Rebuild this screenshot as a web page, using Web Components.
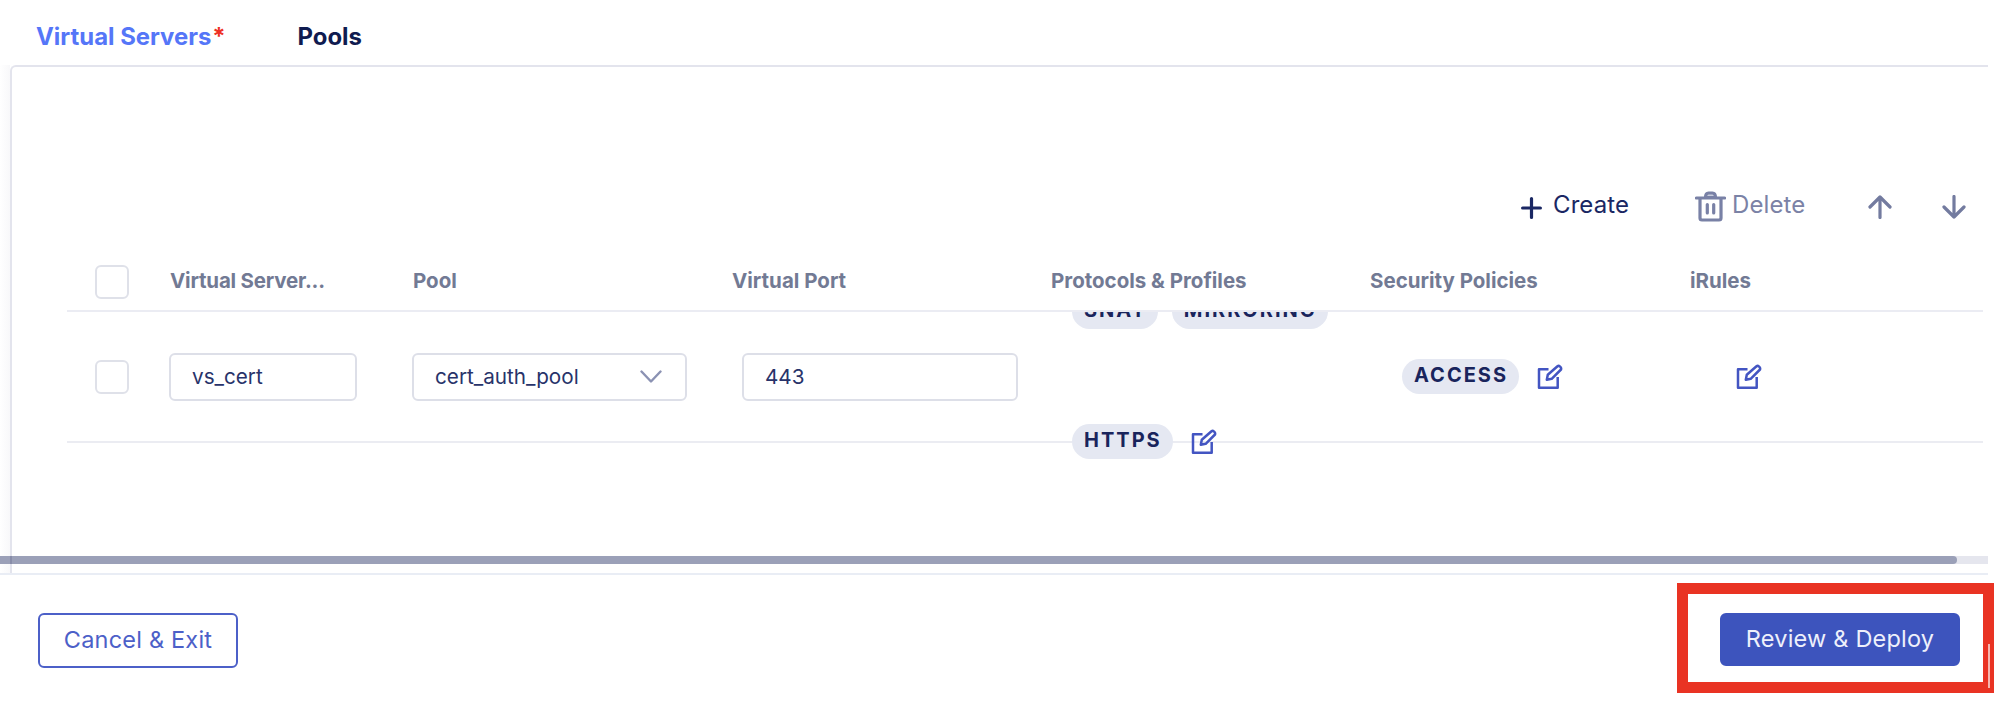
<!DOCTYPE html>
<html lang="en">
<head>
<meta charset="utf-8">
<title>Virtual Servers</title>
<style>
html,body{margin:0;height:100%;background:#fff}
body{font-family:Inter,"Liberation Sans",sans-serif;overflow:hidden}
</style>
</head>
<body>
<app-page></app-page>
<script>
const define = (name, html) => customElements.define(name, class extends HTMLElement {
  constructor() {
    super();
    const t = document.createElement('template');
    t.innerHTML = html;
    this.attachShadow({ mode: 'open' }).appendChild(t.content.cloneNode(true));
  }
});

define('check-box', `<style>:host{display:block;box-sizing:border-box;width:34px;height:34px;border:2px solid #dfe1e9;border-radius:6px;background:#fff}</style>`);

define('text-field', `<style>
:host{display:flex;align-items:center;justify-content:space-between;box-sizing:border-box;height:48px;padding:0 23px 0 21px;border:2px solid #dddfe8;border-radius:6px;color:#28336a;font-size:20.7px;line-height:24px;white-space:nowrap}
</style><span><slot></slot></span><slot name="icon"></slot>`);

define('tag-pill', `<style>
:host{display:block;box-sizing:border-box;height:35px;padding:0 11px 0 12px;border-radius:18px;background:#e5e8f2;color:#19245c;font-size:20px;font-weight:650;line-height:32px;letter-spacing:2px;white-space:nowrap}
</style><slot></slot>`);

define('icon-edit', `<style>:host{display:block;width:26px;height:26px}svg{display:block}</style>
<svg width="26" height="26" viewBox="0 0 26 26" fill="none" stroke="#4355c2" stroke-width="2.500" stroke-linejoin="round"><path d="M11.500 5.200H2v18.600h18.700V13"/><path d="M9.800 15.800l1-5L20.500 2.200c1.500-1 4.300 1 3.500 3.300l-9.300 9.300z"/></svg>`);

define('icon-chevron', `<style>:host{display:block}svg{display:block}</style>
<svg width="22" height="14" viewBox="0 0 22 14" fill="none" stroke="#8b92b3" stroke-width="2.400" stroke-linecap="round" stroke-linejoin="round"><path d="M1.500 1.500l9.500 10 9.500-10"/></svg>`);

define('tab-label', `<style>
:host{display:block;color:#0f1b50;font-size:23.900px;font-weight:700;line-height:30px;white-space:nowrap}
:host([active]){width:189px;color:#5576f8}
</style><slot></slot>`);

define('required-mark', `<style>:host{color:#ee3124;margin-left:1px}</style>*`);

define('tab-bar', `<style>:host{display:flex;box-sizing:border-box;height:65px;padding:22px 0 0 36px;gap:72.500px}</style><slot></slot>`);

define('tool-action', `<style>
:host{display:flex;align-items:flex-start;color:#1a2763;font-size:24px;line-height:30px;letter-spacing:.1px;white-space:nowrap}
:host([muted]){color:#7b82a6}
</style><slot name="icon"></slot><slot></slot>`);

define('tool-bar', `<style>
:host{display:flex;box-sizing:border-box;height:71px;margin-top:-1px;padding:0 0 0 1454px;margin-bottom:1px}
svg{display:block}
.create svg{margin:7px 11px 0 0}
.create{width:174px}
.delete svg{margin:1px 6px 0 0}
.delete{width:173px}
.up{width:74px}
.up svg,.down svg{margin-top:5px}
</style>
<tool-action class="create"><svg slot="icon" width="21" height="22" viewBox="0 0 21 22" stroke="#1a2763" stroke-width="3.200" stroke-linecap="round"><path d="M10.500 1.600v18.800M1.600 11h17.800"/></svg>Create</tool-action>
<tool-action class="delete" muted><svg slot="icon" width="31" height="31" viewBox="0 0 31 31" fill="none" stroke="#7981a6" stroke-width="3.200" stroke-linecap="round" stroke-linejoin="round"><path d="M1.500 7h28M5 7v20q0 2 2 2h17q2 0 2-2V7"/><path d="M10.500 6.500q0-4.500 3-4.500h4q3 0 3 4.500z" fill="#c9cddd"/><path d="M12.300 13.500v8.500M18.700 13.500v8.500"/></svg>Delete</tool-action>
<tool-action class="up"><svg slot="icon" width="24" height="24" viewBox="0 0 24 24" fill="none" stroke="#737b9f" stroke-width="3.200" stroke-linecap="round" stroke-linejoin="round"><path d="M12 22.500V2M2 12L12 2l10 10"/></svg></tool-action>
<tool-action class="down"><svg slot="icon" width="24" height="24" viewBox="0 0 24 24" fill="none" stroke="#737b9f" stroke-width="3.200" stroke-linecap="round" stroke-linejoin="round"><path d="M12 1.500V22M2 12l10 10 10-10"/></svg></tool-action>`);

define('server-table', `<style>
:host{display:block;width:1916px}
.grid{display:grid;grid-template-columns:102px 243px 319px 319px 319px 320px 294px}
.head{box-sizing:border-box;height:50px;border-bottom:2px solid #ebecf3;color:#727a94;font-size:20.500px;font-weight:700;line-height:27px;white-space:nowrap}
.head check-box,.row check-box{margin-left:28px}
.head span{padding:5px 0 0 1px}
.head .trim{letter-spacing:-.2px}
.head check-box{margin-top:3px}
.row{box-sizing:border-box;height:131px;grid-template-rows:129px;align-items:center;border-bottom:2px solid #ebecf2}
.name{width:188px}
.pool{width:275px}
.port{width:276px;margin-left:11px}
.profiles{align-self:start;height:148px;margin-left:22px;overflow:hidden}
.stack{display:flex;flex-direction:column;gap:95px;margin-top:-18px}
.line{display:flex;align-items:center;gap:14px}
.line.last{gap:18px}
.policies{display:flex;align-items:center;gap:18px;margin-left:33px}
.rules{margin-left:47px}
</style>
<div class="grid head"><check-box></check-box><span class="trim">Virtual Server...</span><span>Pool</span><span>Virtual Port</span><span>Protocols &amp; Profiles</span><span>Security Policies</span><span>iRules</span></div>
<div class="grid row"><check-box></check-box>
<text-field class="name">vs_cert</text-field>
<text-field class="pool">cert_auth_pool<icon-chevron slot="icon"></icon-chevron></text-field>
<text-field class="port">443</text-field>
<div class="profiles"><div class="stack"><div class="line"><tag-pill>SNAT</tag-pill><tag-pill>MIRRORING</tag-pill></div><div class="line last"><tag-pill>HTTPS</tag-pill><icon-edit></icon-edit></div></div></div>
<div class="policies"><tag-pill>ACCESS</tag-pill><icon-edit></icon-edit></div>
<div class="rules"><icon-edit></icon-edit></div></div>`);

define('content-panel', `<style>
:host{display:flex;height:508px;width:1988px;overflow:hidden}
.edge{flex:none;width:10px;background:linear-gradient(90deg,#fff,#f8f8fa)}
.body{flex:1;min-width:0;box-sizing:border-box;border:2px solid #e3e4ed;border-right:0;border-bottom:0;border-top-left-radius:6px;padding:124px 0 0 55px}
</style><div class="edge"></div><div class="body"><slot></slot></div>`);

define('scroll-track', `<style>
:host{display:block;height:8px;width:1988px;margin-top:-17px;margin-bottom:9px;background:#e5e6ee;position:relative}
div{width:1957px;height:8px;border-radius:0 4px 4px 0;background:linear-gradient(90deg,transparent 10px,#888da9 10px,#888da9 12px,transparent 12px),#9ba0b8}
</style><div></div>`);

define('action-button', `<style>
:host{display:flex;align-items:center;justify-content:center;box-sizing:border-box;height:55px;padding-bottom:3px;border:2px solid #4c60c8;border-radius:6px;color:#4c60c8;font-size:23.500px;letter-spacing:.2px;white-space:nowrap}
:host([primary]){background:#3d54bd;border-color:#3d54bd;color:#eef0fb}
</style><slot></slot>`);

define('page-footer', `<style>
:host{display:flex;justify-content:space-between;box-sizing:border-box;height:135px;width:1994px;padding-left:37px;position:relative}
:host::before{content:"";position:absolute;left:0;top:0;width:1988px;height:2px;background:#e9edf5}
.cancel{width:200px;margin-top:40px;margin-left:1px}
.mark{display:flex;box-sizing:border-box;width:317px;height:110px;margin-top:10px;border:11px solid #e93323;padding:19px 0 0 32px;position:relative}
.mark::after{content:"";position:absolute;right:-7px;top:50px;width:2px;height:44px;background:#f7b5ae}
.deploy{width:240px;height:53px}
</style>
<action-button class="cancel">Cancel &amp; Exit</action-button>
<div class="mark"><action-button class="deploy" primary>Review &amp; Deploy</action-button></div>`);

define('app-page', `<style>:host{display:block;width:2000px;height:708px;overflow:hidden;background:#fff}</style>
<tab-bar><tab-label active>Virtual Servers<required-mark></required-mark></tab-label><tab-label>Pools</tab-label></tab-bar>
<content-panel><tool-bar></tool-bar><server-table></server-table></content-panel>
<scroll-track></scroll-track>
<page-footer></page-footer>`);
</script>
</body>
</html>
